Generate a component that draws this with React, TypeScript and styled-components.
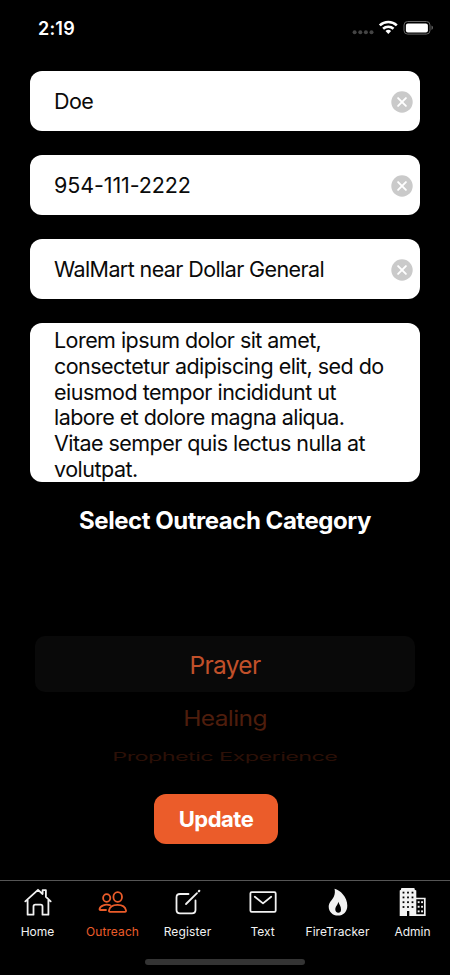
import React from 'react';
import styled, { createGlobalStyle } from 'styled-components';

const GlobalStyle = createGlobalStyle`
  * { box-sizing: border-box; }
  body { margin: 0; background: #000; font-family: Inter, "Liberation Sans", sans-serif; }
`;

const Screen = styled.div`
  width: 450px;
  height: 975px;
  background: #000;
  color: #fff;
  display: flex;
  flex-direction: column;
  overflow: hidden;
`;

const StatusBar = styled.header`
  flex: none;
  height: 71px;
  padding: 18px 16px 0 38px;
  display: flex;
  justify-content: space-between;
  align-items: flex-start;
`;

const Clock = styled.span`
  font-size: 18px;
  line-height: 21px;
  font-weight: 600;
  letter-spacing: 0.2px;
`;

const Form = styled.div`
  flex: none;
  display: flex;
  flex-direction: column;
  gap: 24px;
  padding: 0 30px;
`;

const Field = styled.div`
  height: 60px;
  border-radius: 12px;
  background: #fff;
  color: #0a0a0a;
  display: flex;
  align-items: center;
  justify-content: space-between;
  padding: 1px 7.5px 0 24px;
`;

const FieldText = styled.span<{ $track: number }>`
  font-size: 21.5px;
  line-height: 25px;
  letter-spacing: ${p => p.$track}px;
  white-space: nowrap;
`;

const Notes = styled.div`
  height: 159px;
  border-radius: 12px;
  background: #fff;
  color: #0a0a0a;
  padding: 5px 0 0 24px;
  overflow: hidden;
`;

const NoteLine = styled.div<{ $track: number }>`
  font-size: 21.5px;
  line-height: 25.8px;
  letter-spacing: ${p => p.$track}px;
  white-space: nowrap;
`;

const Heading = styled.h2`
  flex: none;
  margin: 24px 0 0;
  font-size: 24px;
  line-height: 30px;
  font-weight: 700;
  letter-spacing: -0.47px;
  text-align: center;
`;

const Picker = styled.div`
  flex: none;
  height: 258px;
  padding: 100px 35px 0;
  display: flex;
  flex-direction: column;
  align-items: center;
  overflow: hidden;
`;

const SelectedOption = styled.div`
  flex: none;
  width: 100%;
  height: 56px;
  padding-top: 1px;
  border-radius: 10px;
  background: #090909;
  color: #c1502a;
  display: flex;
  align-items: center;
  justify-content: center;
  font-size: 24.5px;
  letter-spacing: -0.7px;
`;

const Option = styled.div<{ $height: number; $color: string; $sx: number; $sy: number }>`
  flex: none;
  height: ${p => p.$height}px;
  line-height: ${p => p.$height}px;
  color: ${p => p.$color};
  font-size: 24.5px;
  letter-spacing: -0.6px;
  white-space: nowrap;
  transform: scale(${p => p.$sx}, ${p => p.$sy});
`;

const UpdateButton = styled.button`
  flex: none;
  align-self: center;
  margin-left: -18px;
  width: 124px;
  height: 50px;
  border: 0;
  padding: 0;
  border-radius: 12px;
  background: #eb5c2a;
  color: #fff;
  font: 700 22px/50px Inter, sans-serif;
  letter-spacing: -0.5px;
`;

const TabBar = styled.nav`
  flex: none;
  margin-top: auto;
  height: 95px;
  border-top: 1px solid #555;
  display: flex;
  flex-wrap: wrap;
  align-content: flex-start;
`;

const Tab = styled.div<{ $active?: boolean; $track: number }>`
  width: 75px;
  height: 78px;
  padding-top: 6px;
  display: flex;
  flex-direction: column;
  align-items: center;
  gap: 7px;
  color: ${p => (p.$active ? '#eb5c2a' : '#f2f2f2')};
  font-size: 12px;
  line-height: 16px;
  letter-spacing: ${p => p.$track}px;
  svg { flex: none; }
`;

const HomeIndicator = styled.div`
  width: 160px;
  height: 6px;
  margin: 0 auto;
  border-radius: 3px;
  background: #343434;
`;

const StatusIcons = () => (
  <svg width="82" height="22" viewBox="0 0 82 22">
    <g fill="#444">
      <circle cx="2.6" cy="14.3" r="2" /><circle cx="8.3" cy="14.3" r="2" />
      <circle cx="13.9" cy="14.3" r="2" /><circle cx="19.5" cy="14.3" r="2" />
    </g>
    <g fill="none" stroke="#fff" strokeWidth="2.6">
      <path d="M27.8 7.4a12.4 12.4 0 0 1 17 0" />
      <path d="M31.1 10.8a7.6 7.6 0 0 1 10.4 0" />
    </g>
    <path d="M33.500 12.900a4.300 4.300 0 0 1 5.600 0L36.300 16Z" fill="#fff" />
    <rect x="52" y="3.500" width="26" height="12.600" rx="3.600" fill="none" stroke="#666" />
    <rect x="53.900" y="5.400" width="22" height="9" rx="2" fill="#fff" />
    <path d="M79.500 7.600v4.400q1.500-.6 1.500-2.200t-1.500-2.200Z" fill="#666" />
  </svg>
);

const ClearIcon = () => (
  <svg width="22" height="22" viewBox="0 0 22 22">
    <circle cx="11" cy="11" r="10.700" fill="#cacaca" />
    <path d="m7.100 7.100 7.800 7.800m0-7.800-7.800 7.800" stroke="#fff" strokeWidth="1.900" strokeLinecap="round" />
  </svg>
);

const stroke = { fill: 'none', stroke: 'currentColor', strokeWidth: 1.8, strokeLinejoin: 'round' as const, strokeLinecap: 'round' as const };

const HomeIcon = () => (
  <svg width="30" height="30" viewBox="0 0 30 30" {...stroke}>
    <path d="M2.300 14.400 15 2.800l4.600 4.200V3.200h3.300v6.700L27.700 14.400M4.600 13v14.700h5.900v-8.200q0-1.800 1.800-1.800h5.400q1.800 0 1.800 1.800v8.200h5.900V13" />
  </svg>
);

const OutreachIcon = () => (
  <svg width="30" height="30" viewBox="0 0 30 30" {...stroke}>
    <ellipse cx="8.700" cy="11" rx="3.600" ry="3.900" />
    <ellipse cx="19.700" cy="10" rx="4.300" ry="4.900" />
    <path d="M12 24.800q-1.200 0-1-1.500c.7-3.700 4.400-5.500 8.500-5.500s7.800 1.800 8.500 5.500q.2 1.500-1 1.500ZM12 18.200C7.500 16.800 2.200 18.600 1.500 22.200q0 .8.900.8h5.600" />
  </svg>
);

const RegisterIcon = () => (
  <svg width="30" height="30" viewBox="0 0 30 30" {...stroke}>
    <path d="M15.500 7H7Q3.500 7 3.500 10.500V23Q3.500 26.300 7 26.300H19Q22.500 26.300 22.500 23V13.400M13 17 24 6.200" />
    <path d="m25.900 4.200.3-.3" strokeWidth="2.300" />
  </svg>
);

const TextIcon = () => (
  <svg width="30" height="30" viewBox="0 0 30 30" {...stroke}>
    <rect x="2.400" y="5.200" width="25.300" height="19.700" rx="1.300" />
    <path d="m6.800 9.800 8.200 6.600 8.200-6.600" />
  </svg>
);

const FireIcon = () => (
  <svg width="30" height="30" viewBox="0 0 30 30">
    <path fillRule="evenodd" fill="currentColor" d="M11.500 1.700c5.600 1.200 12.800 8.200 12.800 17 0 6-4 9.900-9.300 9.900s-9.300-3.600-9.300-8.800c0-4.600 3.600-6.700 5.200-10.300 1.200-2.800 1.200-5.400.6-7.800ZM15.300 14.800c-.5 3.400-3 4.700-3 7.700 0 2 1.200 3.200 3 3.200s2.700-1.200 2.700-3.300c0-3-1.700-4.500-2.700-7.600Z" />
  </svg>
);

const AdminIcon = () => (
  <svg width="30" height="30" viewBox="0 0 30 30">
    <path fill="currentColor" d="M1.700 29V3.500L3 2.800V1.800Q3 1 4 1H15.700Q16.700 1 16.700 1.800V2.800L18.300 3.500V29h-7v-5H9v5Z" />
    <path d="M18 11.500h8.800V28.100h-8.800" fill="none" stroke="currentColor" strokeWidth="1.700" />
    <g fill="#000">
      {[4.7, 9.5, 14.3, 19.1].flatMap(y => [4.6, 9.1, 13.6].map(x => <rect key={`${x}-${y}`} x={x} y={y} width="1.800" height="1.800" />))}
    </g>
    <g fill="currentColor">
      {[14.2, 18.8, 23.4].flatMap(y => [19.7, 23.1].map(x => <rect key={`${x}-${y}`} x={x} y={y} width="1.900" height="1.900" />))}
    </g>
  </svg>
);

const tabs = [
  { label: 'Home', Icon: HomeIcon, track: 0 },
  { label: 'Outreach', Icon: OutreachIcon, track: 0.1, active: true },
  { label: 'Register', Icon: RegisterIcon, track: 0.15 },
  { label: 'Text', Icon: TextIcon, track: 0 },
  { label: 'FireTracker', Icon: FireIcon, track: 0.05 },
  { label: 'Admin', Icon: AdminIcon, track: 0 },
];

const fields = [
  { value: 'Doe', track: -0.6 },
  { value: '954-111-2222', track: -0.1 },
  { value: 'WalMart near Dollar General', track: -0.6 },
];

const noteLines = [
  { value: 'Lorem ipsum dolor sit amet,', track: -0.55 },
  { value: 'consectetur adipiscing elit, sed do', track: -0.53 },
  { value: 'eiusmod tempor incididunt ut', track: -0.51 },
  { value: 'labore et dolore magna aliqua.', track: -0.56 },
  { value: 'Vitae semper quis lectus nulla at', track: -0.55 },
  { value: 'volutpat.', track: -0.5 },
];

export default function App() {
  return (
    <Screen>
      <GlobalStyle />
      <StatusBar><Clock>2:19</Clock><StatusIcons /></StatusBar>
      <Form>
        {fields.map(f => (
          <Field key={f.value}><FieldText $track={f.track}>{f.value}</FieldText><ClearIcon /></Field>
        ))}
        <Notes>
          {noteLines.map(l => <NoteLine key={l.value} $track={l.track}>{l.value}</NoteLine>)}
        </Notes>
      </Form>
      <Heading>Select Outreach Category</Heading>
      <Picker>
        <SelectedOption>Prayer</SelectedOption>
        <Option $height={53} $color="#4e1d0c" $sx={1} $sy={0.86}>Healing</Option>
        <Option $height={24} $color="#2c1007" $sx={0.955} $sy={0.46}>Prophetic Experience</Option>
      </Picker>
      <UpdateButton>Update</UpdateButton>
      <TabBar>
        {tabs.map(({ label, Icon, track, active }) => (
          <Tab key={label} $active={active} $track={track}><Icon />{label}</Tab>
        ))}
        <HomeIndicator />
      </TabBar>
    </Screen>
  );
}
